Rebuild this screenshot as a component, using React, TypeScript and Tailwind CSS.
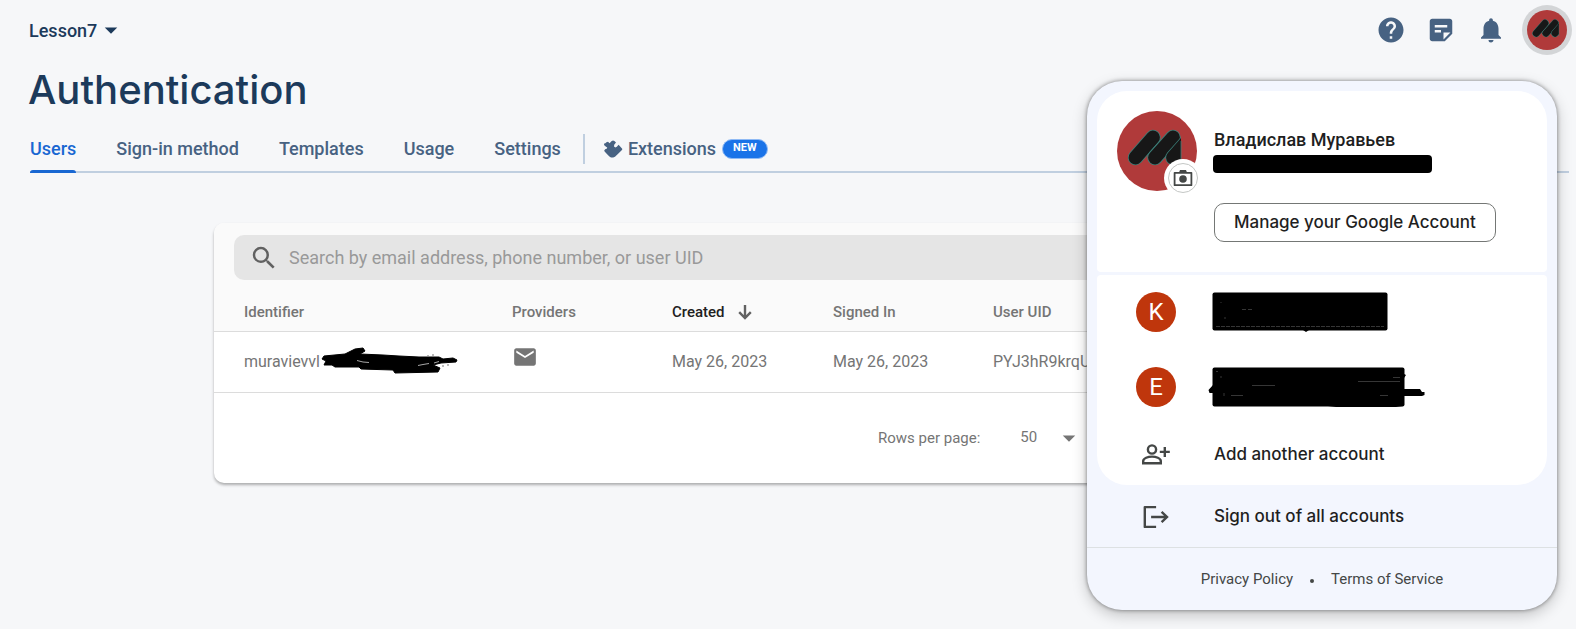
import React from "react";
import {
  MdArrowDropDown,
  MdEmail,
  MdHelp,
  MdNotifications,
  MdSearch,
  MdStickyNote2,
} from "react-icons/md";

const tabs = ["Users", "Sign-in method", "Templates", "Usage", "Settings"];

function AvatarMark({ id, className }: { id: string; className: string }) {
  return (
    <svg viewBox="0 0 80 80" className={className} aria-hidden="true">
      <circle cx="40" cy="40" r="40" fill="#b03a3a" />
      <clipPath id={id}>
        <rect x="0" y="0" width="64" height="80" />
      </clipPath>
      <g clipPath={`url(#${id})`} strokeLinecap="round" fill="none">
        <path d="M18.5 46.5L36 26.5" stroke="#3b7f78" strokeWidth="15.4" />
        <path d="M18.5 46.5L36 26.5" stroke="#171717" strokeWidth="13.8" />
        <path d="M38 46.5L56 26.5" stroke="#3b7f78" strokeWidth="15.4" />
        <path d="M38 46.5L56 26.5" stroke="#171717" strokeWidth="13.8" />
        <path d="M56 46.5L76 24" stroke="#3b7f78" strokeWidth="15.4" />
        <path d="M56 46.5L76 24" stroke="#171717" strokeWidth="13.8" />
      </g>
      <path d="M64 30V53" stroke="#3b7f78" strokeWidth="0.8" />
    </svg>
  );
}

function CameraIcon() {
  return (
    <svg viewBox="0 0 20 18" className="h-[18px] w-5 shrink-0" aria-hidden="true">
      <path d="M1.6 3.8H18.4V16.2H1.6Z" fill="none" stroke="#444746" strokeWidth="1.8" strokeLinejoin="round" />
      <path d="M6 3.6L7 1H13L14 3.6Z" fill="#444746" />
      <circle cx="10" cy="10" r="3.8" fill="#444746" />
    </svg>
  );
}

function SortArrowIcon() {
  return (
    <svg viewBox="0 0 20 20" className="size-5" aria-hidden="true" fill="none" stroke="#616161" strokeWidth="2.4">
      <path d="M10 3V16M4.2 10.2L10 16L15.8 10.2" />
    </svg>
  );
}

function ExtensionIcon() {
  return (
    <svg viewBox="0 0 20 18" className="h-[18px] w-5" aria-hidden="true">
      <path
        d="M3.4 2.2L5 1.8L6.6 3.2L8.4 1.2L10 .6L11.4 1L13 2.6L11.2 4.8L11 6.6L12.4 7.4L13.8 6.8L15.6 4.8L19.2 8.8V9.8L15.4 13.4L12 16.8L10.2 17.4H8L6.4 16.6L4.4 14.4L1.6 11.6L1.2 10.4L2.2 9.2L4 8.4L4.2 7.4L3 6.8L1 5L1.2 3.4L2.4 3.2Z"
        fill="#476282"
      />
    </svg>
  );
}

function PersonAddIcon() {
  return (
    <svg viewBox="0 0 30 24" className="h-6 w-[30px]" aria-hidden="true" fill="none" stroke="#444746" strokeWidth="2.4">
      <circle cx="11" cy="6.5" r="4.1" />
      <path d="M2.2 20.3V18.1C2.2 15.1 7.1 13.6 11 13.6S19.8 15.1 19.8 18.1V20.3Z" />
      <path d="M23.8 3.9V13.9M18.8 8.9H28.8" />
    </svg>
  );
}

function SignOutIcon() {
  return (
    <svg viewBox="0 0 30 24" className="h-6 w-[30px]" aria-hidden="true" fill="none" stroke="#444746" strokeWidth="2.4">
      <path d="M15.1 2.1H3.8V21.9H15.1" strokeLinejoin="round" />
      <path d="M10.1 12H26M20.6 6.8L26 12L20.6 17.2" />
    </svg>
  );
}

function EmailScribble() {
  return (
    <svg viewBox="0 0 138 28" className="absolute -top-1 left-[77px] h-7 w-[138px]" aria-hidden="true">
      <path
        d="M3 10L24 8L34 3L42 2L44 5L39 8L62 9L78 10L98 11L106 11L118 11L122 13L132 12L136 14L135 16L120 17L112 19L119 22L117 26L74 27L72 24L40 23L38 21L14 21L11 19L3 19L5 15L1 13Z"
        fill="#000"
        stroke="#000"
        strokeLinejoin="round"
      />
      <path d="M36 14.5L42 16L48 16.5M97 19.5L102 18.5L108 17.5M113 17L118 15.5" stroke="#d0d0d0" strokeWidth="0.8" fill="none" />
      <path d="M107 9V10M112 8V10M122 19V21M127 18V20" stroke="#777" />
    </svg>
  );
}

export default function App() {
  return (
    <div className="relative min-h-screen bg-[#f6f7f9] font-['Roboto',sans-serif] text-[#757575]">
      <header className="flex h-[60px] items-center justify-between pr-1 pl-[29px]">
        <button className="flex items-center text-[18px] font-medium text-[#1c3a5b]">
          Lesson7
          <MdArrowDropDown className="-ml-px size-[30px]" />
        </button>
        <div className="flex items-center gap-5 text-[#476282]">
          <button aria-label="Help">
            <MdHelp className="size-[30px]" />
          </button>
          <button aria-label="Release notes">
            <MdStickyNote2 className="size-[30px]" />
          </button>
          <button aria-label="Notifications">
            <MdNotifications className="size-[30px]" />
          </button>
          <button aria-label="Account" className="-ml-1 rounded-full bg-[#d3d5d7] p-[5px]">
            <AvatarMark id="mark-small" className="size-10" />
          </button>
        </div>
      </header>

      <h1 className="flex h-[60px] items-center pl-[28px] font-['Inter',sans-serif] text-[40px] font-medium text-[#1c3a5b]">
        Authentication
      </h1>

      <nav className="mr-[7px] ml-[30px] flex h-[53px] gap-10 border-b-2 border-[#c0cfe0] pt-1.5 text-[18px] font-medium text-[#476282]">
        {tabs.map((tab, i) => (
          <a
            key={tab}
            href="#"
            aria-current={i === 0 ? "page" : undefined}
            className={
              i === 0
                ? "relative flex items-center text-[#1967d2] after:absolute after:inset-x-0 after:-bottom-0.5 after:h-[3px] after:rounded-t-sm after:bg-[#1967d2]"
                : "flex items-center"
            }
          >
            {tab}
          </a>
        ))}
        <div className="-ml-[18px] flex items-center">
          <div className="mr-[18px] h-[30px] w-0.5 bg-[#c0cfe0]" />
          <a href="#" className="flex items-center">
            <ExtensionIcon />
            <span className="ml-[5px]">Extensions</span>
            <span className="ml-1.5 flex h-5 items-center rounded-full border border-[#8fbaf5] bg-[#1a73e8] px-2.5 text-[11px] font-bold text-white">
              NEW
            </span>
          </a>
        </div>
      </nav>

      <main className="px-[214px] pt-[50px]">
        <section className="mr-[-23px] overflow-hidden rounded-[10px] bg-white shadow-[0_2px_3px_rgba(0,0,0,0.3)]">
          <div className="bg-[#fafafa] px-5 pt-3">
            <label className="flex h-[45px] items-center gap-2.5 rounded-[10px] bg-[#e5e5e5] pl-[15px]">
              <MdSearch className="size-[30px] text-[#616161]" />
              <input
                type="search"
                aria-label="Search users"
                placeholder="Search by email address, phone number, or user UID"
                className="flex-1 bg-transparent text-[18px] outline-none placeholder:text-[#999999]"
              />
            </label>
          </div>
          <table className="w-full table-fixed text-left">
            <thead className="bg-[#fafafa] text-[15px]">
              <tr className="h-[51px] border-b border-[#dcdcdc]">
                <th className="w-[298px] pt-3.5 pl-[30px] font-medium">Identifier</th>
                <th className="w-40 pt-3.5 font-medium">Providers</th>
                <th className="w-[161px] pt-3.5 font-medium text-[#212121]">
                  <span className="flex items-center gap-2.5">
                    Created
                    <SortArrowIcon />
                  </span>
                </th>
                <th className="w-40 pt-3.5 font-medium">Signed In</th>
                <th className="pt-3.5 font-medium">User UID</th>
              </tr>
            </thead>
            <tbody className="text-[16px]">
              <tr className="h-[61px] border-b border-[#dcdcdc]">
                <td className="pl-[30px]">
                  <div className="relative h-6 leading-6">
                    muravievvl
                    <EmailScribble />
                  </div>
                </td>
                <td>
                  <MdEmail className="mb-2.5 size-[26px]" />
                </td>
                <td>May 26, 2023</td>
                <td>May 26, 2023</td>
                <td>PYJ3hR9krqU</td>
              </tr>
            </tbody>
          </table>
          <div className="flex h-[90px] items-center pt-0.5 pl-[664px] text-[15px]">
            <label htmlFor="rows">Rows per page:</label>
            <div className="relative mb-0.5 ml-10 flex items-center">
              <select id="rows" className="w-[60px] appearance-none bg-transparent">
                <option>50</option>
              </select>
              <MdArrowDropDown className="pointer-events-none absolute -right-1 size-[30px]" />
            </div>
          </div>
        </section>
      </main>

      <aside className="absolute top-[81px] right-[19px] w-[470px] rounded-[35px] bg-[#f3f6fe] px-2.5 pt-2.5 text-[17px] font-medium text-[#1f1f1f] shadow-[0_5px_15px_rgba(0,0,0,0.22),0_0_4px_rgba(0,0,0,0.45)]">
        <div className="flex h-[181px] rounded-t-[30px] rounded-b bg-white pt-5 pl-5">
          <div className="relative size-20">
            <AvatarMark id="mark-large" className="size-20" />
            <button
              aria-label="Change profile picture"
              className="absolute -right-px -bottom-0.5 flex size-[30px] items-center justify-center rounded-full border border-[#c4c7c5] bg-white shadow-[0_0_0_4px_#fff]"
            >
              <CameraIcon />
            </button>
          </div>
          <div className="ml-[17px] pt-[17px]">
            <div className="h-6 text-[18px] leading-6">Владислав Муравьев</div>
            <div className="-ml-px mt-[3px] h-[18px] w-[219px] rounded-sm bg-black" />
            <button className="mt-[30px] h-[39px] rounded-[10px] border border-[#747775] px-[19px] font-['Inter',sans-serif]">
              Manage your Google Account
            </button>
          </div>
        </div>

        <div className="mt-[3px] rounded-t rounded-b-[30px] bg-white font-['Inter',sans-serif]">
          <button className="flex h-[74px] w-full items-center pl-[39px]">
            <span className="flex size-10 items-center justify-center rounded-full bg-[#bf360c] font-['Roboto',sans-serif] text-[24px] font-normal text-white">
              K
            </span>
            <svg viewBox="0 0 176 40" className="ml-9 h-10 w-44" aria-hidden="true">
              <rect x="0.5" y="0.5" width="175" height="38" rx="2" />
              <path d="M4 34.5H172" stroke="#444" strokeWidth="0.8" strokeDasharray="4 1" />
              <path d="M30 17.5H34M36 17.5H40M9 10V11M13 25V27" stroke="#444" strokeWidth="0.8" />
              <path d="M91 38L94 40L97 38Z" />
            </svg>
          </button>
          <button className="flex h-[75px] w-full items-center pl-[39px]">
            <span className="flex size-10 items-center justify-center rounded-full bg-[#bf360c] font-['Roboto',sans-serif] text-[24px] font-normal text-white">
              E
            </span>
            <svg viewBox="0 0 218 40" className="ml-8 h-10 w-[218px]" aria-hidden="true">
              <rect x="4.5" y="0.5" width="192" height="39" rx="2" />
              <path d="M5 18L0.5 23L1.5 26H6ZM196 22H212L214 25H216.5V28L214 29H196ZM196 7L198 8L196 11ZM120 39L128 40H188L195 39Z" />
              <path d="M44 18.5H67M150 14.5H192M23 28.5H35M172 28.5H180M185 10.5H192M16 26V29M8 4.5H10M13 9V11" stroke="#444" strokeWidth="0.8" />
            </svg>
          </button>
          <button className="flex h-[61px] w-full items-center pl-11">
            <PersonAddIcon />
            <span className="ml-[43px]">Add another account</span>
          </button>
        </div>

        <button className="flex h-[62px] w-full items-center pt-0.5 pl-11 font-['Inter',sans-serif]">
          <SignOutIcon />
          <span className="ml-[43px]">Sign out of all accounts</span>
        </button>
        <footer className="-mx-2.5 flex h-[63px] items-center justify-center gap-[17px] border-t border-[#dde1e3] text-[15px] font-normal text-[#444746]">
          <a href="#">Privacy Policy</a>
          <span className="mt-1 size-1 rounded-full bg-[#444746]" />
          <a href="#">Terms of Service</a>
        </footer>
      </aside>
    </div>
  );
}
